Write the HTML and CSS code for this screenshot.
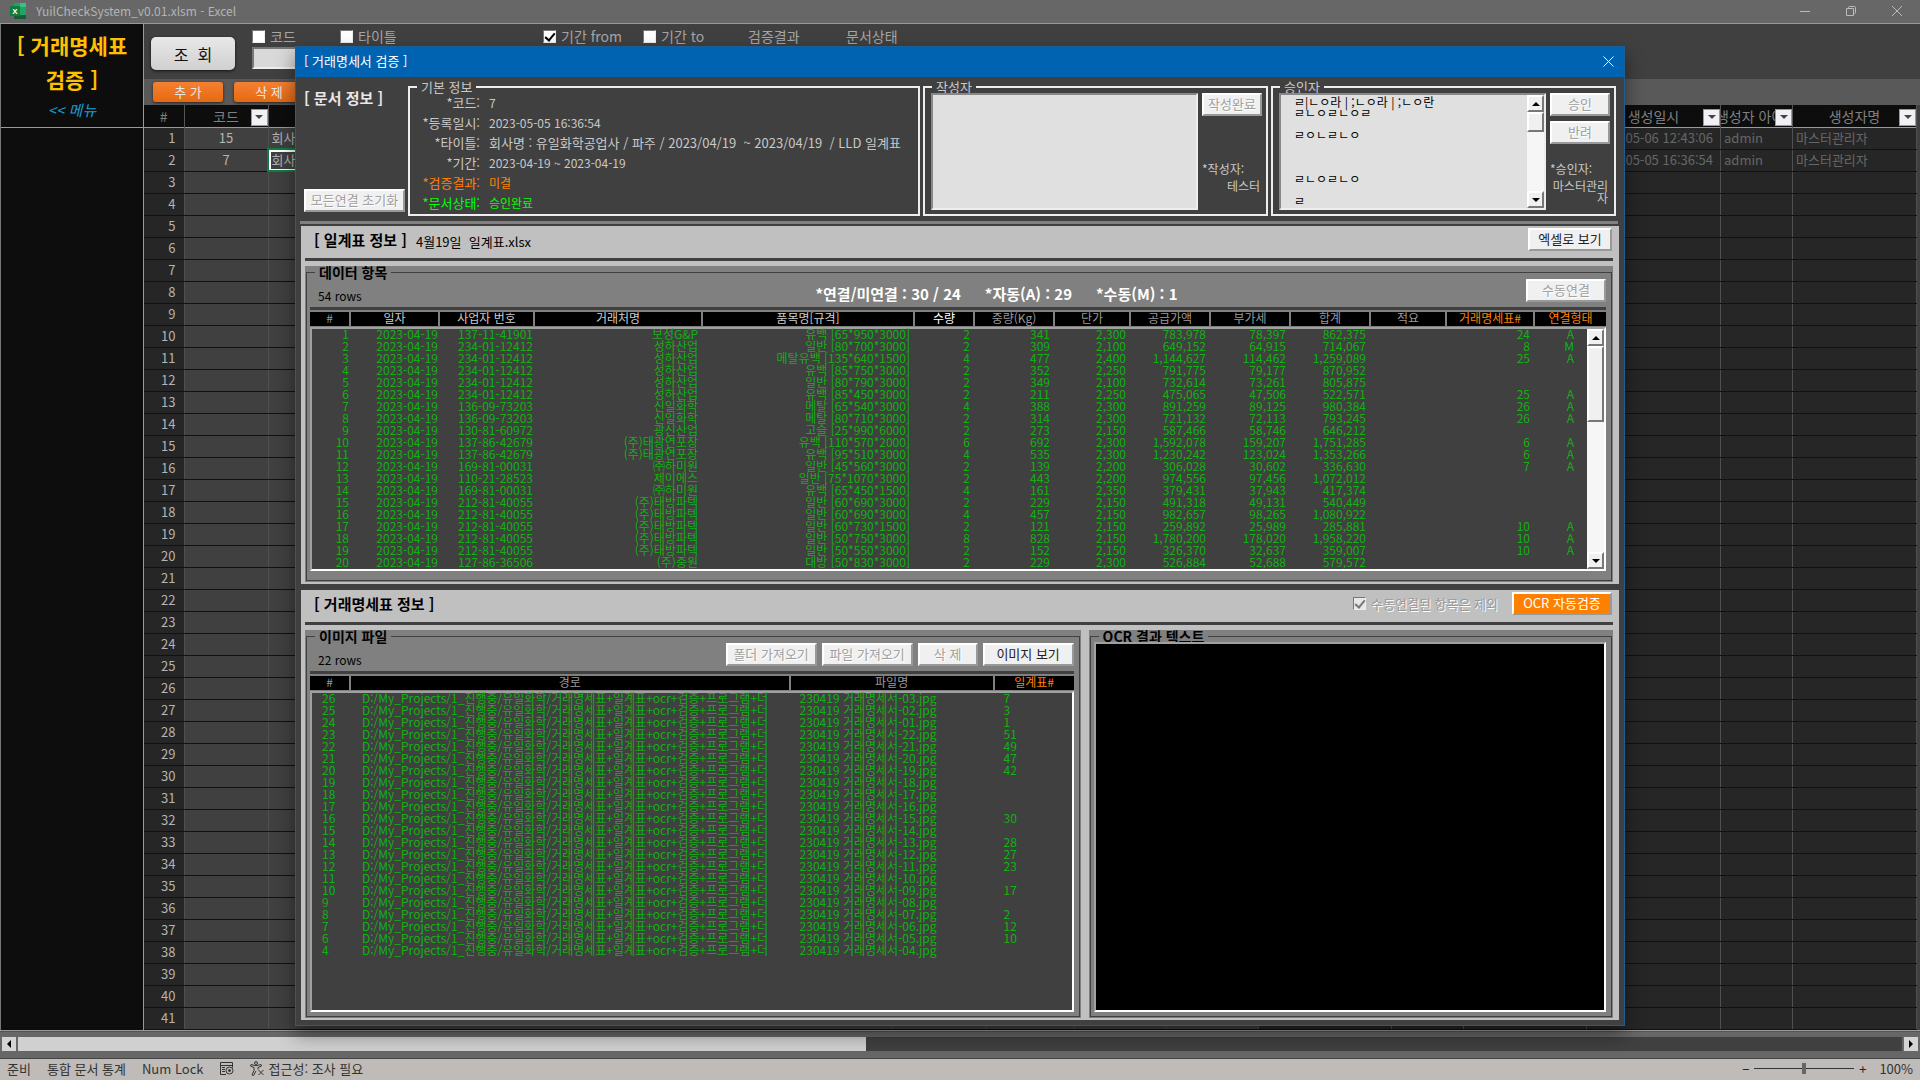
FILE: index.html
```html
<!DOCTYPE html>
<html lang="ko">
<head>
    <meta charset="UTF-8">
    <meta name="viewport" content="width=device-width, initial-scale=1.0">
    <title>YuilCheckSystem_v0.01.xlsm - Excel</title>
    <link rel="stylesheet" href="styles.css">
</head>
<body>

<!-- 엑셀 창 -->
<header class="titlebar">
    <svg class="excel-icon" width="16" height="16" viewBox="0 0 16 16">
        <rect x="4" y="0" width="12" height="16" rx="1" fill="#21a366"/>
        <rect x="4" y="4" width="6" height="8" fill="#107c41"/>
        <rect x="10" y="0" width="6" height="4" fill="#33c481"/>
        <rect x="4" y="12" width="12" height="4" fill="#185c37"/>
        <rect x="0" y="3" width="10" height="10" rx="1" fill="#107c41"/>
        <text x="5" y="11" text-anchor="middle" class="excel-x">X</text>
    </svg>
    <span class="titlebar-text">YuilCheckSystem_v0.01.xlsm - Excel</span>
    <div class="window-buttons">
        <button aria-label="최소화"><svg width="10" height="10" viewBox="0 0 10 10"><path d="M0 5.5h10"/></svg></button>
        <button aria-label="이전 크기로"><svg width="10" height="10" viewBox="0 0 10 10"><path d="M.5 2.5h7v7h-7zM2.5 2.5v-1q0-1 1-1h5q1 0 1 1v5q0 1-1 1h-1"/></svg></button>
        <button aria-label="닫기"><svg width="10" height="10" viewBox="0 0 10 10"><path d="M0 0l10 10M10 0L0 10"/></svg></button>
    </div>
</header>

<main class="workspace">
    <aside class="sidebar">
        <div class="sidebar-head">
            <h1>[ 거래명세표<br>검증 ]</h1>
            <a href="#">&lt;&lt; 메뉴</a>
        </div>
    </aside>

    <div class="sheet">
        <div class="filters">
            <button class="search-button">조 &nbsp;회</button>
            <div class="filter-fields">
                <div class="filter">
                    <label><input type="checkbox" class="check"> 코드</label>
                    <input type="text" class="filter-input" aria-label="코드">
                </div>
                <div class="filter"><label><input type="checkbox" class="check"> 타이틀</label></div>
                <div class="filter"><label><input type="checkbox" class="check" checked> 기간 from</label></div>
                <div class="filter"><label><input type="checkbox" class="check"> 기간 to</label></div>
                <div class="filter">검증결과</div>
                <div class="filter">문서상태</div>
            </div>
        </div>
        <div class="sheet-toolbar">
            <button>추 가</button>
            <button>삭 제</button>
        </div>
        <table class="sheet-table">
            <colgroup>
                <col class="s-no"><col class="s-code"><col><col class="s-a"><col class="s-b"><col class="s-c"><col class="s-c">
                <col class="s-d"><col class="s-e"><col class="s-f"><col class="s-date"><col class="s-id"><col class="s-name">
            </colgroup>
            <thead>
                <tr>
                    <th class="no">#</th>
                    <th><div class="th-box"><span>코드</span><button class="drop" aria-label="코드 필터"></button></div></th>
                    <th></th><th></th><th></th><th></th><th></th><th></th><th></th><th></th>
                    <th><div class="th-box"><span>생성일시</span><button class="drop" aria-label="생성일시 필터"></button></div></th>
                    <th><div class="th-box"><span>생성자 아이디</span><button class="drop" aria-label="생성자 아이디 필터"></button></div></th>
                    <th><div class="th-box"><span>생성자명</span><button class="drop" aria-label="생성자명 필터"></button></div></th>
                </tr>
            </thead>
            <tbody id="sheetBody"></tbody>
        </table>
    </div>
</main>

<div class="hscroll">
    <button class="hscroll-arrow" aria-label="왼쪽"><span class="arrow-left"></span></button>
    <div class="hscroll-track"><div class="hscroll-thumb"></div></div>
    <button class="hscroll-arrow" aria-label="오른쪽"><span class="arrow-right"></span></button>
</div>

<footer class="statusbar">
    <span>준비</span>
    <span>통합 문서 통계</span>
    <span>Num Lock</span>
    <svg width="14" height="13" viewBox="0 0 14 13" fill="none" stroke="#333">
        <path d="M6 12.5H.5v-12h12v5M.5 3.5h12M2 5.5h3M2 7.5h3M2 9.5h3"/>
        <circle cx="9.5" cy="8.5" r="3.5"/><circle cx="9.5" cy="8.5" r="1" fill="#333"/>
    </svg>
    <span class="access">
        <svg width="15" height="15" viewBox="0 0 15 15" fill="none" stroke="#333">
            <circle cx="6" cy="2" r="1.5"/>
            <path d="M1 3.5q5 2.500 10 0l.5 1.500L8 6.500v2M1 3.500L.5 5 4 6.500v3L2 14l1.500.5L6 10M8.500 9l5 5M13.500 9l-5 5"/>
        </svg>
        접근성: 조사 필요
    </span>
    <div class="zoom">
        <button aria-label="축소">−</button>
        <input type="range" min="10" max="190" value="100" aria-label="확대/축소">
        <button aria-label="확대">+</button>
        <span>100%</span>
    </div>
</footer>

<!-- 검증 팝업 -->
<div class="dialog" role="dialog" aria-label="거래명세서 검증">
    <div class="dialog-title">
        <span>[ 거래명세서 검증 ]</span>
        <button aria-label="닫기"><svg width="11" height="11" viewBox="0 0 11 11"><path d="M.5.5l10 10M10.500.5l-10 10"/></svg></button>
    </div>

    <!-- 문서 정보 -->
    <section class="doc">
        <div class="doc-side">
            <h2>[ 문서 정보 ]</h2>
            <button class="btn" disabled>모든연결 초기화</button>
        </div>
        <fieldset class="frame frame-info">
            <legend>기본 정보</legend>
            <dl class="info">
                <dt>*코드:</dt><dd>7</dd>
                <dt>*등록일시:</dt><dd>2023-05-05 16:36:54</dd>
                <dt>*타이틀:</dt><dd class="doc-name">회사명 : 유일화학공업사 / 파주 / 2023/04/19 &nbsp;~ 2023/04/19 &nbsp;/ LLD 일계표</dd>
                <dt>*기간:</dt><dd>2023-04-19 ~ 2023-04-19</dd>
                <dt class="orange">*검증결과:</dt><dd class="orange">미결</dd>
                <dt class="lime">*문서상태:</dt><dd class="lime">승인완료</dd>
            </dl>
        </fieldset>
        <fieldset class="frame frame-sign">
            <legend>작성자</legend>
            <div class="memo"><textarea aria-label="작성자 의견"></textarea></div>
            <div class="sign">
                <button class="btn" disabled>작성완료</button>
                <p>*작성자:</p>
                <p class="sign-name">테스터</p>
            </div>
        </fieldset>
        <fieldset class="frame frame-sign">
            <legend>승인자</legend>
            <div class="memo">
                <textarea class="memo-text" aria-label="승인자 의견">ㄹ|ㄴㅇ라 | ;ㄴㅇ라 | ;ㄴㅇ란
ㄹㄴㅇㄹㄴㅇㄹ

ㄹㅇㄴㄹㄴㅇ



ㄹㄴㅇㄹㄴㅇ

ㄹ</textarea>
                <div class="vscroll">
                    <button aria-label="위로"><span class="arrow-up"></span></button>
                    <div class="vscroll-thumb thumb-short"></div>
                    <button class="last" aria-label="아래로"><span class="arrow-down"></span></button>
                </div>
            </div>
            <div class="sign">
                <button class="btn" disabled>승인</button>
                <button class="btn" disabled>반려</button>
                <p>*승인자:</p>
                <p class="sign-name">마스터관리자</p>
            </div>
        </fieldset>
    </section>

    <hr class="divider">

    <!-- 일계표 정보 -->
    <section class="panel">
        <div class="panel-head">
            <h2>[ 일계표 정보 ]</h2>
            <span class="file">4월19일 &nbsp;일계표.xlsx</span>
            <button class="btn btn-view">엑셀로 보기</button>
        </div>
        <div class="group">
            <fieldset class="group-box group-data">
                <legend>데이터 항목</legend>
                <div class="list-head">
                    <span class="count">54 rows</span>
                    <div class="stats">
                        <span>*연결/미연결 : 30 / 24</span>
                        <span>*자동(A) : 29</span>
                        <span>*수동(M) : 1</span>
                    </div>
                    <button class="btn btn-link" disabled>수동연결</button>
                </div>
                <table class="list-cols">
                    <colgroup>
                        <col class="w40"><col class="w89"><col class="w95"><col class="w168"><col><col class="w60"><col class="w80">
                        <col class="w76"><col class="w80"><col class="w80"><col class="w80"><col class="w76"><col class="w88"><col class="w72">
                    </colgroup>
                    <tr>
                        <th class="dim">#</th><th>일자</th><th>사업자 번호</th><th>거래처명</th><th>품목명[규격]</th><th class="white">수량</th>
                        <th class="dim">중량(Kg)</th><th class="dim">단가</th><th class="dim">공급가액</th><th class="dim">부가세</th>
                        <th class="dim">합계</th><th class="dim">적요</th><th class="orange">거래명세표#</th><th class="orange">연결형태</th>
                    </tr>
                </table>
                <div class="listbox">
                    <table class="rows rows-data">
                        <colgroup>
                            <col class="w38"><col class="w89"><col class="w95"><col class="w168"><col><col class="w60"><col class="w80">
                            <col class="w76"><col class="w80"><col class="w80"><col class="w80"><col class="w76"><col class="w88"><col class="w53">
                        </colgroup>
                        <tbody id="dataBody"></tbody>
                    </table>
                    <div class="vscroll">
                        <button aria-label="위로"><span class="arrow-up"></span></button>
                        <div class="vscroll-thumb thumb-long"></div>
                        <button class="last" aria-label="아래로"><span class="arrow-down"></span></button>
                    </div>
                </div>
            </fieldset>
        </div>
    </section>

    <!-- 거래명세표 정보 -->
    <section class="panel panel-files">
        <div class="panel-head">
            <h2>[ 거래명세표 정보 ]</h2>
            <label class="exclude"><input type="checkbox" class="check" checked disabled> 수동연결된 항목은 제외</label>
            <button class="btn btn-ocr">OCR 자동검증</button>
        </div>
        <div class="columns">
            <div class="group group-files">
                <fieldset class="group-box">
                    <legend>이미지 파일</legend>
                    <div class="list-head">
                        <span class="count">22 rows</span>
                        <div class="file-buttons">
                            <button class="btn" disabled>폴더 가져오기</button>
                            <button class="btn" disabled>파일 가져오기</button>
                            <button class="btn btn-small" disabled>삭 제</button>
                            <button class="btn">이미지 보기</button>
                        </div>
                    </div>
                    <table class="list-cols">
                        <colgroup><col class="w40"><col><col class="w204"><col class="w80"></colgroup>
                        <tr><th class="dim">#</th><th class="dim">경로</th><th class="dim">파일명</th><th class="orange">일계표#</th></tr>
                    </table>
                    <div class="listbox">
                        <table class="rows rows-files">
                            <colgroup><col class="w38"><col><col class="w204"><col class="w78"></colgroup>
                            <tbody id="fileBody"></tbody>
                        </table>
                    </div>
                </fieldset>
            </div>
            <div class="group group-ocr">
                <fieldset class="group-box">
                    <legend>OCR 결과 텍스트</legend>
                    <textarea class="ocr-text" aria-label="OCR 결과 텍스트"></textarea>
                </fieldset>
            </div>
        </div>
    </section>
</div>

<script>
// 일계표 데이터
var data = [
    ['137-11-41901', '보성G&P', '유백 [65*950*3000]', '2', '341', '2,300', '783,978', '78,397', '862,375', '24', 'A'],
    ['234-01-12412', '성하산업', '일반 [80*700*3000]', '2', '309', '2,100', '649,152', '64,915', '714,067', '8', 'M'],
    ['234-01-12412', '성하산업', '메탈유백 [135*640*1500]', '4', '477', '2,400', '1,144,627', '114,462', '1,259,089', '25', 'A'],
    ['234-01-12412', '성하산업', '유백 [85*750*3000]', '2', '352', '2,250', '791,775', '79,177', '870,952', '', ''],
    ['234-01-12412', '성하산업', '일반 [80*790*3000]', '2', '349', '2,100', '732,614', '73,261', '805,875', '', ''],
    ['234-01-12412', '성하산업', '유백 [85*450*3000]', '2', '211', '2,250', '475,065', '47,506', '522,571', '25', 'A'],
    ['136-09-73203', '신일화학', '메탈 [65*540*3000]', '4', '388', '2,300', '891,259', '89,125', '980,384', '26', 'A'],
    ['136-09-73203', '신일화학', '메탈 [80*710*3000]', '2', '314', '2,300', '721,132', '72,113', '793,245', '26', 'A'],
    ['130-81-60972', '광신산업', '고슬 [25*990*6000]', '2', '273', '2,150', '587,466', '58,746', '646,212', '', ''],
    ['137-86-42679', '(주)태광연포장', '유백 [110*570*2000]', '6', '692', '2,300', '1,592,078', '159,207', '1,751,285', '6', 'A'],
    ['137-86-42679', '(주)태광연포장', '유백 [95*510*3000]', '4', '535', '2,300', '1,230,242', '123,024', '1,353,266', '6', 'A'],
    ['169-81-00031', '㈜하미원', '일반 [45*560*3000]', '2', '139', '2,200', '306,028', '30,602', '336,630', '7', 'A'],
    ['110-21-28523', '제이에스', '일반 [75*1070*3000]', '2', '443', '2,200', '974,556', '97,456', '1,072,012', '', ''],
    ['169-81-00031', '㈜하미원', '유백 [65*450*1500]', '4', '161', '2,350', '379,431', '37,943', '417,374', '', ''],
    ['212-81-40055', '(주)태방파텍', '일반 [60*690*3000]', '2', '229', '2,150', '491,318', '49,131', '540,449', '', ''],
    ['212-81-40055', '(주)태방파텍', '일반 [60*690*3000]', '4', '457', '2,150', '982,657', '98,265', '1,080,922', '', ''],
    ['212-81-40055', '(주)태방파텍', '일반 [60*730*1500]', '2', '121', '2,150', '259,892', '25,989', '285,881', '10', 'A'],
    ['212-81-40055', '(주)태방파텍', '일반 [50*750*3000]', '8', '828', '2,150', '1,780,200', '178,020', '1,958,220', '10', 'A'],
    ['212-81-40055', '(주)태방파텍', '일반 [50*550*3000]', '2', '152', '2,150', '326,370', '32,637', '359,007', '10', 'A'],
    ['127-86-36506', '(주)중원', '대방 [50*830*3000]', '2', '229', '2,300', '526,884', '52,688', '579,572', '', '']
];

// 이미지 파일: [번호, 파일 번호, 일계표#]
var files = [
    [26, '03', 7], [25, '02', 3], [24, '01', 1], [23, '22', 51], [22, '21', 49], [21, '20', 47],
    [20, '19', 42], [19, '18', ''], [18, '17', ''], [17, '16', ''], [16, '15', 30], [15, '14', ''],
    [14, '13', 28], [13, '12', 27], [12, '11', 23], [11, '10', ''], [10, '09', 17], [9, '08', ''],
    [8, '07', 2], [7, '06', 12], [6, '05', 10], [4, '04', '']
];
var path = 'D:/My_Projects/1_진행중/유일화학/거래명세표+일계표+ocr+검증+프로그램+더';

var sheetRows = [
    ['15', '회사명', '2023-05-06 12:43:06', 'admin', '마스터관리자'],
    ['7', '회사명', '2023-05-05 16:36:54', 'admin', '마스터관리자']
];

function addRow(body, cells) {
    var tr = document.createElement('tr');
    cells.forEach(function(text) {
        var td = document.createElement('td');
        td.textContent = text;
        tr.appendChild(td);
    });
    body.appendChild(tr);
    return tr;
}

// 시트 41행
for (var i = 0; i < 41; i++) {
    var r = sheetRows[i] || ['', '', '', '', ''];
    var tr = addRow(document.getElementById('sheetBody'),
        [i + 1, r[0], r[1], '', '', '', '', '', '', '', r[2], r[3], r[4]]);
    if (i === 1) {
        tr.children[2].className = 'selected';
    }
}

data.forEach(function(d, i) {
    addRow(document.getElementById('dataBody'),
        [i + 1, '2023-04-19'].concat(d.slice(0, 9), [''], d.slice(9)));
});

files.forEach(function(f) {
    addRow(document.getElementById('fileBody'), [f[0], path, '230419 거래명세서-' + f[1] + '.jpg', f[2]]);
});
</script>

</body>
</html>
```
FILE: styles.css
```css
* {
    box-sizing: border-box;
}
body {
    margin: 0;
    height: 100vh;
    display: flex;
    flex-direction: column;
    overflow: hidden;
    background: #676767;
    color: #a6a6a6;
    font-family: "Noto Sans CJK KR", sans-serif;
    font-size: 12px;
    line-height: 16px;
}
button, input, textarea {
    font-family: inherit;
    font-size: inherit;
    line-height: inherit;
    padding: 0;
    margin: 0;
}
h1, h2, p, dl, dd {
    margin: 0;
}
table {
    border-collapse: collapse;
    table-layout: fixed;
    width: 100%;
}
th {
    font-weight: normal;
}
th, td {
    padding: 0;
    white-space: nowrap;
}

/* 제목 표시줄 */
.titlebar {
    display: flex;
    align-items: center;
    height: 24px;
    padding: 0 0 2px 10px;
    border-bottom: 1px solid #999;
    color: #b4b4b4;
}
.excel-x {
    font: bold 8px "Liberation Sans", sans-serif;
    fill: #fff;
}
.titlebar-text {
    margin-left: 10px;
}
.window-buttons {
    margin-left: auto;
    display: flex;
}
.window-buttons button {
    width: 46px;
    border: none;
    background: none;
}
.window-buttons svg {
    fill: none;
    stroke: #bbb;
}

/* 왼쪽 메뉴 */
.workspace {
    flex: 1;
    min-height: 0;
    display: flex;
    overflow: hidden;
    border-bottom: 1px solid #999;
}
.sidebar {
    width: 144px;
    background: #0d0d0d;
    border-left: 1px solid #777;
    border-right: 1px solid #999;
}
.sidebar-head {
    height: 104px;
    padding-top: 4px;
    border-bottom: 1px solid #999;
    text-align: center;
}
.sidebar-head h1 {
    font-size: 21px;
    line-height: 34px;
    color: #ffc000;
}
.sidebar-head a {
    display: block;
    font-size: 15px;
    line-height: 28px;
    font-style: italic;
    color: #1c9ad6;
    text-decoration: none;
}

/* 시트 */
.sheet {
    flex: 1;
    min-width: 0;
    padding-right: 3px;
    background: #404040;
}
.filters {
    display: flex;
    height: 55px;
    padding-left: 7px;
    font-size: 14px;
}
.search-button {
    width: 84px;
    height: 33px;
    margin: 13px 17px 0 0;
    border: none;
    border-radius: 5px;
    background: linear-gradient(#e8e8e8, #d0d0d0);
    box-shadow: 0 1px 3px #111;
    font-size: 16px;
    color: #111;
}
.filter-fields {
    display: grid;
    grid-template-columns: 88px 203px 100px 105px 98px 98px;
    padding-top: 3px;
}
.filter label {
    display: flex;
    align-items: center;
    gap: 5px;
}
.filter, .filter label {
    line-height: 18px;
}
.check {
    appearance: none;
    width: 13px;
    height: 13px;
    border: 1px solid #777;
    border-right-color: #eee;
    border-bottom-color: #eee;
    background: #fff;
    display: grid;
    place-items: center;
}
.check:checked::after {
    content: "";
    width: 4px;
    height: 8px;
    margin-bottom: 2px;
    border: solid #000;
    border-width: 0 2px 2px 0;
    transform: rotate(40deg);
}
.check:disabled {
    background: #e8e8e8;
}
.check:disabled::after {
    border-color: #777;
}
.filter-input {
    width: 84px;
    height: 22px;
    margin-top: 2px;
    border: 2px solid;
    border-color: #777 #eee #eee #777;
    background: #d9d9d9;
}
.sheet-toolbar {
    display: flex;
    gap: 11px;
    height: 26px;
    margin-right: -3px;
    padding: 3px 0 3px 9px;
    background: #595959;
}
.sheet-toolbar button {
    width: 70px;
    border: none;
    border-radius: 3px;
    background: linear-gradient(#f68033, #e5690f);
    box-shadow: 0 1px 3px #222;
    color: #e8e8e8;
    font-size: 13px;
}
.s-no { width: 40px; }
.s-code { width: 84px; }
.s-a { width: 94px; }
.s-b { width: 88px; }
.s-c { width: 92px; }
.s-d { width: 133px; }
.s-e { width: 72px; }
.s-f { width: 123px; }
.s-date { width: 134px; }
.s-id { width: 72px; }
.s-name { width: 124px; }
.sheet-table th {
    height: 22px;
    background: #0d0d0d;
    border-right: 1px solid #555;
    color: #808080;
    font-size: 14px;
    line-height: 20px;
}
.sheet-table thead {
    border-bottom: 1px solid #999;
}
.th-box {
    position: relative;
    display: flex;
    justify-content: center;
    overflow: hidden;
}
.drop {
    position: absolute;
    right: 0;
    bottom: 0;
    width: 17px;
    height: 17px;
    display: grid;
    place-items: center;
    border: 1px solid #999;
    background: #f0f0f5;
}
.drop::after {
    content: "";
    border: 4px solid transparent;
    border-top-color: #444;
    border-bottom: none;
}
.sheet-table td {
    height: 22px;
    border-right: 1px solid #505050;
    border-bottom: 1px solid #111;
    font-size: 13px;
    line-height: 20px;
    color: #b4b4b4;
    padding-left: 3px;
}
.sheet-table td:first-child {
    padding-right: 8px;
    background: #262626;
    text-align: right;
}
.sheet-table td:nth-child(2) {
    padding-left: 0;
    text-align: center;
}
.sheet-table td:nth-child(n+8) {
    background: #262626;
    color: #666;
}
.sheet-table td:nth-child(11) {
    padding-right: 7px;
    text-align: right;
}
.sheet-table td.selected {
    outline: 2px solid #107c41;
    outline-offset: -1px;
    box-shadow: inset 0 0 0 2px #fff;
}

/* 가로 스크롤 */
.hscroll {
    display: flex;
    gap: 2px;
    height: 28px;
    padding: 6px 2px 7px;
    border-bottom: 1px solid #444;
    box-shadow: inset 0 1px #555;
}
.hscroll-arrow {
    width: 14px;
    display: grid;
    place-items: center;
    border: none;
    background: #d4d4d4;
}
.hscroll-track {
    flex: 1;
    background: #404040;
}
.hscroll-thumb {
    width: 45%;
    height: 100%;
    background: #d0d0d0;
}
.arrow-left, .arrow-right, .arrow-up, .arrow-down {
    border: 4px solid transparent;
}
.arrow-left {
    border-right-color: #000;
    border-left: none;
}
.arrow-right {
    border-left-color: #000;
    border-right: none;
}
.arrow-up {
    border-bottom-color: #000;
    border-top: none;
}
.arrow-down {
    border-top-color: #000;
    border-bottom: none;
}

/* 상태 표시줄 */
.statusbar {
    display: flex;
    align-items: center;
    gap: 16px;
    height: 21px;
    padding: 0 7px 2px;
    background: #bfbbb8;
    color: #333;
    font-size: 13px;
}
.access {
    display: flex;
    align-items: center;
    gap: 4px;
}
.zoom {
    margin-left: auto;
    display: flex;
    align-items: center;
    gap: 4px;
}
.zoom button {
    width: 9px;
    border: none;
    background: none;
    color: #222;
}
.zoom span {
    margin-left: 8px;
}
.zoom input {
    appearance: none;
    width: 100px;
    height: 12px;
    background: linear-gradient(#333, #333) center / 100% 1px no-repeat;
}
.zoom input::-webkit-slider-thumb {
    appearance: none;
    width: 4px;
    height: 11px;
    background: #666;
}

/* 팝업 */
.dialog {
    position: absolute;
    top: 46px;
    left: 295px;
    right: 295px;
    bottom: 54px;
    display: flex;
    flex-direction: column;
    border: 1px solid #1c5f96;
    background: #404040;
    box-shadow: 0 8px 18px rgba(0, 0, 0, 0.45);
    color: #c8c8c8;
}
.dialog-title {
    display: flex;
    justify-content: space-between;
    align-items: center;
    height: 30px;
    padding: 0 10px 2px 8px;
    background: #0063b1;
    color: #fff;
    font-size: 13px;
}
.dialog-title button {
    display: flex;
    border: none;
    background: none;
}
.dialog-title svg {
    fill: none;
    stroke: #fff;
}
.dialog h2 {
    font-size: 15px;
    line-height: 18px;
    white-space: nowrap;
}
.btn {
    height: 23px;
    padding-bottom: 1px;
    border: 2px solid;
    border-color: #fff #999 #999 #fff;
    background: #f0f0f0;
    color: #222;
    font-size: 13px;
    line-height: 16px;
    white-space: nowrap;
}
.btn:disabled {
    color: #a0a0a0;
    text-shadow: 1px 1px #fff;
}
.orange {
    color: #ff8000;
}
.lime {
    color: #00ff00;
}
.white {
    color: #fff;
}
.dim {
    color: #999;
}

/* 문서 정보 */
.doc {
    display: flex;
    gap: 3px;
    height: 144px;
    padding: 4px 8px 5px 6px;
}
.doc-side {
    width: 103px;
    display: flex;
    flex-direction: column;
    justify-content: space-between;
    padding: 8px 0 4px 2px;
    color: #e8e8e8;
}
.frame {
    min-width: 0;
    margin: 0;
    padding: 0 4px 4px 6px;
    border: 2px solid #eee;
}
.frame legend {
    margin-left: 1px;
    padding: 0 4px;
    font-size: 13px;
    line-height: 12px;
}
.frame-info {
    flex: 1;
}
.frame-sign {
    width: 345px;
    display: flex;
    gap: 4px;
}
.info {
    display: grid;
    grid-template-columns: 64px 1fr;
    column-gap: 9px;
    line-height: 20px;
}
.info dt {
    font-size: 13px;
    text-align: right;
    white-space: nowrap;
}
.info dd {
    white-space: nowrap;
}
.info .doc-name {
    font-size: 13px;
}
.memo {
    flex: 1;
    display: flex;
    border: 2px solid;
    border-color: #888 #eee #eee #888;
    background: #e0e0e0;
}
.memo textarea {
    flex: 1;
    min-width: 0;
    padding: 1px 13px 0;
    border: none;
    background: none;
    resize: none;
    overflow: hidden;
    color: #000;
    font-size: 12px;
    line-height: 11px;
}
.sign {
    width: 60px;
    display: flex;
    flex-direction: column;
    gap: 5px;
}
.sign p {
    line-height: 12px;
}
.sign .btn + p {
    margin-top: auto;
}
.sign .sign-name {
    min-height: 27px;
    margin: 0 2px 3px 0;
    line-height: 12px;
    text-align: right;
    word-break: break-all;
}
.vscroll {
    width: 17px;
    display: flex;
    flex-direction: column;
    background: #f6f6f6;
}
.vscroll button, .vscroll-thumb {
    flex-shrink: 0;
    height: 17px;
    display: grid;
    place-items: center;
    border: 2px solid;
    border-color: #fff #777 #777 #fff;
    background: #f0f0f0;
}
.vscroll .thumb-short {
    height: 20px;
}
.vscroll .thumb-long {
    height: 76px;
}
.vscroll .last {
    margin-top: auto;
}
.divider {
    width: calc(100% - 10px);
    height: 3px;
    margin: 0 4px 2px;
    border: none;
    background: #808080;
}

/* 패널 */
.panel {
    margin: 0 5px 6px;
    padding: 0 6px 2px 4px;
    background: #c0c0c0;
    color: #000;
}
.panel-head {
    display: flex;
    align-items: center;
    height: 35px;
    margin-bottom: 5px;
    padding: 0 1px 5px 9px;
    border-bottom: 3px solid #404040;
}
.file {
    padding: 5px 0 0 9px;
    font-size: 13px;
}
.btn-view {
    width: 84px;
    margin-left: auto;
}
.exclude {
    display: flex;
    align-items: center;
    gap: 5px;
    margin: 0 14px 0 auto;
    color: #999;
    font-size: 13px;
    text-shadow: 1px 1px #fff;
}
.btn-ocr {
    width: 100px;
    background: #ff8000;
    color: #fff;
}
.group {
    padding: 0 1px 1px;
    background: #808080;
}
.group-box {
    min-width: 0;
    margin: 0;
    padding: 0 5px 4px 3px;
    border: 1px solid #404040;
    display: flex;
    flex-direction: column;
}
.group-data {
    padding-bottom: 9px;
}
.group-box legend {
    margin-left: 5px;
    padding: 0 4px;
    font-weight: bold;
    line-height: 12px;
    font-size: 14px;
}
.list-head {
    display: flex;
    align-items: flex-start;
    justify-content: space-between;
    height: 32px;
    margin-bottom: 2px;
    padding-top: 1px;
    border-bottom: 3px solid #404040;
}
.count {
    padding: 9px 0 0 8px;
}
.stats {
    width: 61%;
    display: flex;
    gap: 24px;
    margin-left: auto;
    padding-top: 7px;
    color: #fff;
    font-size: 15px;
    font-weight: bold;
}
.btn-link {
    width: 80px;
    margin-left: -80px;
}
.list-cols th {
    height: 14px;
    border-right: 2px solid #808080;
    background: #000;
    line-height: 12px;
    vertical-align: top;
}
.list-cols th:not([class]) {
    color: #ccc;
}
.list-cols th:last-child {
    border-right: none;
}
.listbox {
    display: flex;
    align-items: flex-start;
    flex: 1;
    min-height: 0;
    margin-top: 1px;
    border: 2px solid;
    border-color: #a0a0a0 #fff #fff #a0a0a0;
    background: #404040;
}
.listbox .vscroll {
    align-self: stretch;
}
.rows {
    flex: 1;
    width: 0;
    color: #12b012;
}
.rows td {
    height: 12px;
    line-height: 10px;
    vertical-align: top;
}
.rows-data td {
    padding-right: 4px;
    text-align: right;
}
.rows-data td:nth-child(-n+3) {
    padding-right: 1px;
}
.rows-data td:last-child {
    padding-right: 13px;
}
.rows-files td {
    padding-left: 10px;
}
.rows-files td:nth-child(2) {
    padding-left: 12px;
}
.w38 { width: 38px; }
.w40 { width: 40px; }
.w53 { width: 53px; }
.w60 { width: 60px; }
.w72 { width: 72px; }
.w76 { width: 76px; }
.w78 { width: 78px; }
.w80 { width: 80px; }
.w88 { width: 88px; }
.w89 { width: 89px; }
.w95 { width: 95px; }
.w168 { width: 168px; }
.w204 { width: 204px; }

/* 이미지 파일 / OCR */
.panel-files {
    flex: 1;
    min-height: 0;
    margin-bottom: 5px;
    display: flex;
    flex-direction: column;
}
.columns {
    flex: 1;
    min-height: 0;
    display: flex;
    gap: 8px;
}
.columns .group {
    display: flex;
}
.columns .group-box {
    flex: 1;
}
.group-files {
    flex: 776;
}
.group-ocr {
    flex: 524;
}
.file-buttons {
    display: flex;
    gap: 5px;
}
.file-buttons .btn {
    width: 91px;
}
.file-buttons .btn-small {
    width: 60px;
}
.ocr-text {
    flex: 1;
    border: 2px solid;
    border-color: #a0a0a0 #fff #fff #a0a0a0;
    background: #000;
    color: #12b012;
    resize: none;
}
```
